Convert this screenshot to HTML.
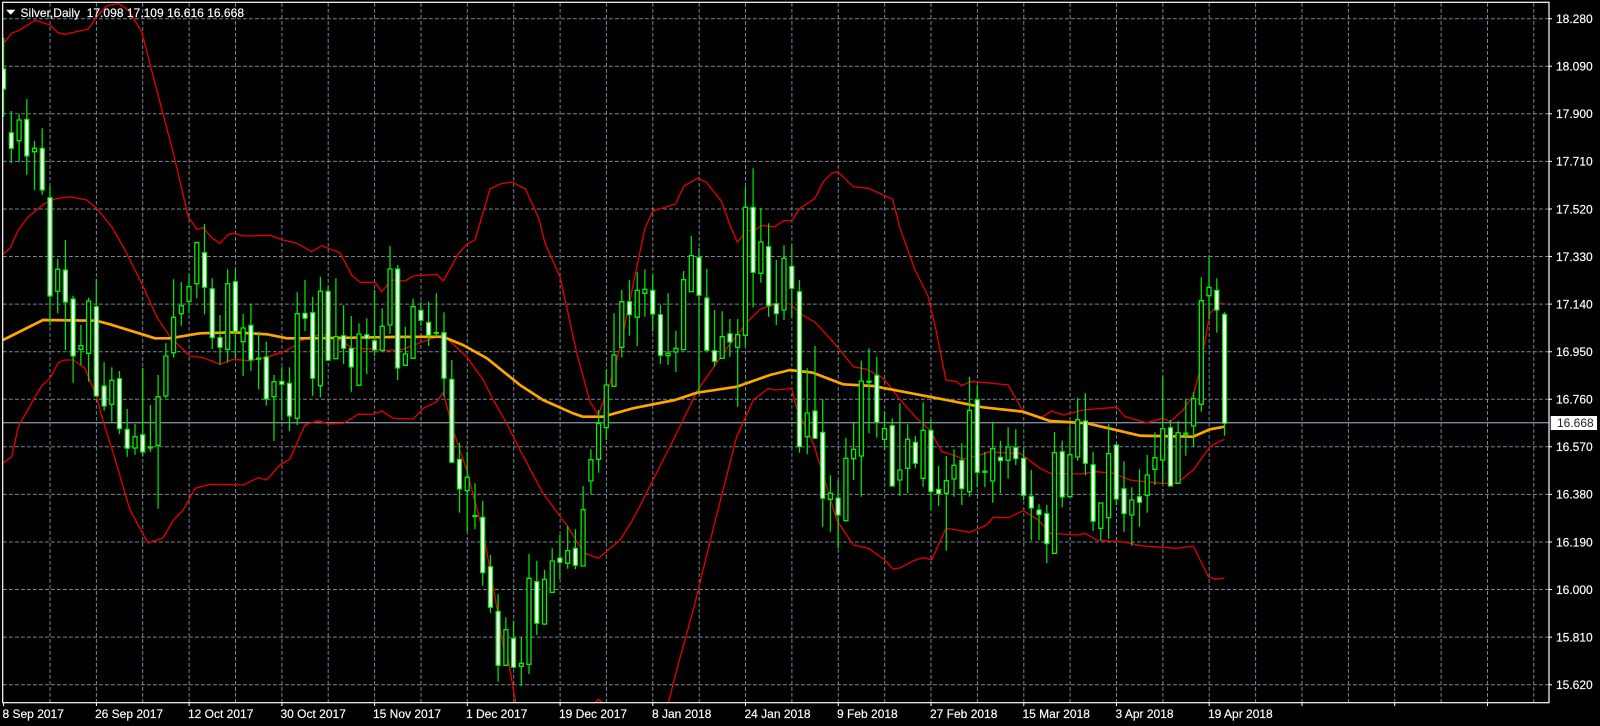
<!DOCTYPE html>
<html>
<head>
<meta charset="utf-8">
<title>Silver,Daily</title>
<style>
html,body{margin:0;padding:0;background:#000;width:1600px;height:726px;overflow:hidden}
svg{display:block;position:absolute;left:0;top:0}
text{font-family:"Liberation Sans",sans-serif;font-size:12px;fill:#fff;stroke:#fff;stroke-width:.15px;white-space:pre}
</style>
</head>
<body>
<svg width="1600" height="726" viewBox="0 0 1600 726" xmlns="http://www.w3.org/2000/svg">
<defs><clipPath id="c"><rect x="3" y="3" width="1546" height="700"/></clipPath></defs>
<rect width="1600" height="726" fill="#000"/>
<!-- grid -->
<g fill="none" stroke="#778899" stroke-width="1" stroke-dasharray="3.8 2.2">
<path d="M3 18.7H1549M3 66.3H1549M3 113.8H1549M3 161.4H1549M3 209H1549M3 256.5H1549M3 304.1H1549M3 351.7H1549M3 399.3H1549M3 446.8H1549M3 494.4H1549M3 542H1549M3 589.5H1549M3 637.1H1549M3 684.7H1549"/>
<path d="M50 3V703M96.4 3V703M142.7 3V703M189.1 3V703M235.5 3V703M281.9 3V703M328.2 3V703M374.6 3V703M421 3V703M467.3 3V703M513.7 3V703M560.1 3V703M606.4 3V703M652.8 3V703M699.2 3V703M745.5 3V703M791.9 3V703M838.3 3V703M884.7 3V703M931 3V703M977.4 3V703M1023.8 3V703M1070.1 3V703M1116.5 3V703M1162.9 3V703M1209.2 3V703M1255.6 3V703M1302 3V703M1348.4 3V703M1394.7 3V703M1441.1 3V703M1487.5 3V703M1533.8 3V703"/>
</g>
<g clip-path="url(#c)">
<!-- bid line -->
<path d="M3 422.7H1549" stroke="#778899" stroke-width="1.4" fill="none"/>
<!-- bands -->
<g fill="none" stroke="#e00000" stroke-width="1.35" stroke-linejoin="round">
<path d="M3 44L11.7 33.3L20 30L35 20.3L50 25L58 32.7L65 34.3L88.3 29L96.7 16.7L106.7 6L118.3 3.3L128.3 10L141.7 31.7L155 83.3L173.3 153L188.3 216.7L196.7 229.3L203.3 227.7L211.7 237.7L220 243.3L228.3 234.3L235 233.3L243.3 236L270 235.3L283.3 240L296.7 243.3L311.7 251.7L321.7 245.7L340 252.7L351.7 275L360 282.3L375 282.3L381.7 291.7L391.7 280L405 281L413.3 276L436.7 274.3L443.3 281L458.3 254L466.7 244.3L475 240L490 189L500 184L512 182L525.5 189L539 219L545 243.3L560 276.7L576.7 353L590 401.7L598.3 415L610 383.3L620 348.3L638.3 260L645 228L653 211L675.5 204L684 186L698 178L706.7 182.7L721.7 201.7L730 225L737.3 242.3L746.7 231L755 230L761.7 225.7L775 226.7L783.3 220.7L791.7 220.7L800 208.3L815 198.3L823.3 181.7L831.7 173.3L837.7 171.7L853.3 186.7L868.3 188.3L883.3 195L892.7 199.3L900 228.3L915 270L928 296L936 330L946 380L956.7 381.7L961.7 385.7L970 381.7L986.7 382.7L1008.3 385L1023.3 411.7L1040 418.3L1051.7 411L1063.3 415L1083.3 410L1103.3 408.3L1116.7 407.3L1125 416.7L1146.7 422.7L1163.3 418.3L1170 421.7L1183.3 410L1193.3 395L1200 370L1203.3 350L1210 313.3L1218.3 304L1224.5 303.3"/>
<path d="M3.3 254L10 248.3L18.3 230L28.3 216.7L45 203.3L55 199L70 196.7L86.7 200L96.7 208.3L111.7 226.7L125 250L143.3 286.7L156.7 316.7L170 336.7L190 356L203.3 357.7L220 364.3L233.3 359.3L248.3 360.7L266.7 357.3L283.3 351.7L293.3 346.7L300 341L310 336.7L323.3 334.3L343.3 341.7L351.7 348.3L375 349L383.3 350.7L403.3 349.3L420 342.7L436.7 336.7L446.7 338.3L466.7 356.7L483.3 380L493.3 400L506.7 423.3L520 450L543.3 494L566.7 525L580 546.7L586.7 554L598.3 558.3L620 540L632.7 520L673.3 440L696.7 391.7L726.7 348.3L748.3 321L760 309.3L776.7 304L790 304L800 313.3L815 322.3L833.3 342L853.3 366.7L866.7 369.3L883.3 378.3L903.3 403.3L916.7 418.3L930 430L941.7 451.7L953.3 455L963.3 459L976.7 456L990 451.7L1010 453.3L1020 453.3L1040 468.3L1050 473.3L1080 474L1096.7 471.7L1113.3 473.3L1130 480L1160 483.3L1176.7 483.3L1193.3 470L1210 446.7L1220 441L1224.5 439.5"/>
<path d="M3.3 463L11.7 456.7L18.3 426.7L33.3 400L41.7 386L50 378.3L58.3 362.7L65 360L73.3 360L85 368.3L96.7 396.7L103.3 421.7L113.3 453.3L130 510L148 543L163 538L173.5 520L183.3 510L195 488.3L210 484.3L243.3 485L258.3 477.7L266.7 480L280 465L290 459L305 425L318.3 420.7L328.3 424L343.3 423.3L358.3 414.3L373.3 414.3L381.7 411L393.3 418.3L413.3 419L423.3 408.3L436.7 401.7L443.3 392.3L453 430L466.7 470L483.3 533.3L495 596.7L503.3 646.7L508.3 660L515.7 703M595 703L598.3 699.3L602.7 703M668 704L678.6 663L694 607L714 525.5L736.7 436.7L753.3 400L768.3 388.5L775 390L791.7 388.5L796.7 408.3L813.3 443.3L822.7 473.3L836.7 520L853.3 545L868.3 548.3L885 560L893 569L900 568L913 561L918.3 559L925 557.7L931.7 560L946 528.3L956.7 530L970 532.3L986.7 525L993.3 517.3L1008.3 517.7L1023.3 510.7L1038.3 520L1050 533.3L1078.3 535L1085 533.3L1096.7 540L1126.7 542.3L1140 545.7L1176.7 548.3L1193.3 546L1208.3 576.7L1215 579.3L1224.5 578"/>
</g>
<!-- MA -->
<path fill="none" stroke="#ffa500" stroke-width="2.7" stroke-linejoin="round" d="M3 340L43 320L96 320.7L110 324.3L155 338.3L170 338.3L200 333.3L233 332.3L267 334.3L287 338.3L313 338.3L393 337L443 336.7L463 345L487 358.3L520 385L543 400L573 413.3L583 416.7L603 416.7L633 408.3L675 400L697 392.7L737 386.7L770 375L790 370L813 372.7L843 384.3L873 386L903 391.7L950 400.7L983 407.3L1023 411.7L1050 421L1087 423.3L1113 429.3L1140 435.7L1193 436.7L1210 429.3L1224.5 426.7"/>
<!-- wicks -->
<path fill="none" stroke="#00e600" stroke-width="1.25" d="M3.6 37.7V116.7M11.3 111V163.3M19.1 114.3V162.3M26.8 99V174.7M34.5 141V190.3M42.2 128.3V194.7M50 186V325.7M57.7 259V313.3M65.4 240V350M73.1 295.7V382.7M80.9 325V365M88.6 297.7V381.7M96.3 279.3V396M104.1 362.3V410.7M111.8 367.3V421.7M119.5 371V434M127.2 409V456.7M135 424V454.7M142.7 368V456M150.4 405V451.7M158.1 375V508.7M165.9 343.3V398.3M173.6 279.3V357.7M181.3 282V325.7M189 274.3V313.3M196.8 241.7V298.3M204.5 224V314.3M212.2 278.3V349M220 315V365M227.7 269.3V362.7M235.4 268.7V358.3M243.1 314V376M250.9 304V370.7M258.6 331.7V389.3M266.3 341.7V405.7M274 375V441M281.8 367.3V420M289.5 367.3V431M297.2 292.3V425M305 280V331M312.7 296.7V395.7M320.4 276.7V397.3M328.1 286V360.3M335.9 278.3V358.7M343.6 305.3V364M351.3 316V391.7M359 323.3V385.7M366.8 318.3V374M374.5 290V356M382.2 308.3V351.7M390 246V334M397.7 265V380M405.4 326.7V366M413.1 298.7V359M420.9 301.7V326M428.6 301.7V346M436.3 293.3V336.7M444 312.3V396.7M451.8 360V463.3M459.5 442.7V512.7M467.2 451.7V531.7M475 483.3V529.3M482.7 500.7V585.7M490.4 555V612.7M498.1 594.3V681.7M505.9 617.3V665M513.6 620.7V668.3M521.3 637.3V686M529 554V674M536.8 560.7V635M544.5 570V625M552.2 548.3V592.3M559.9 535V579M567.7 526V568.7M575.4 529.3V569.3M583.1 486V566M590.9 449.3V494.3M598.6 410V472.7M606.3 370V440M614 313.3V387M621.8 290V357.3M629.5 280V335.7M637.2 272.3V346M644.9 269.3V316.7M652.7 275V331.7M660.4 305.3V364M668.1 293.3V365M675.9 330.7V372M683.6 271V349.7M691.3 236V292M699 248V393M706.8 268.7V350.7M714.5 310V366.7M722.2 311.3V358.7M729.9 319V356.7M737.7 319V406.7M745.4 187.3V346.7M753.1 168.3V307.3M760.9 207.7V282.7M768.6 223.3V316.7M776.3 260V325M784 245.3V320M791.8 244.7V317.7M799.5 280V452.7M807.2 368.3V454.3M815 346V438.3M822.7 399.3V526.7M830.4 475.3V531.7M838.1 480V548.3M845.9 437.7V520.7M853.6 422.7V480M861.3 360.7V496.7M869 348.3V433.3M876.8 356.7V437.7M884.5 411.7V450M892.2 418.3V486.7M899.9 403.3V495.7M907.7 424.3V493.3M915.4 436V468.3M923.1 402.3V486.7M930.9 419.3V510.7M938.6 466V506M946.3 456V550.7M954 449.3V496.7M961.8 443.3V505M969.5 377V496.7M977.2 385V487.3M984.9 451.7V487.3M992.7 421.7V502.7M1000.4 440.7V493.3M1008.1 427.3V478.7M1015.8 429.3V465M1023.6 449.3V500M1031.3 470V540.7M1039 504.3V540M1046.8 505V563.3M1054.5 432V553.3M1062.2 440.7V507.3M1069.9 425.3V496.7M1077.7 397.7V460.7M1085.4 393.3V475.3M1093.1 451.7V531M1100.8 502.7V540M1108.6 424.3V539M1116.3 444.7V505M1124 461.3V531.7M1131.8 487.3V545.7M1139.5 469.3V526.7M1147.2 455V512.7M1154.9 432.3V485M1162.7 376V484M1170.4 420V486.3M1178.1 421V484M1185.8 399.3V455.7M1193.6 391.7V447.3M1201.3 277.3V411.7M1209 255.7V319M1216.8 278.3V332.7M1224.5 312.3V435.7"/>
<!-- hollow bodies -->
<path fill="#000" stroke="#00f000" stroke-width="1.3" d="M17.1 120h4V140.7h-4zM32.5 148.3h4V151.7h-4zM55.7 269.3h4V291.3h-4zM78.9 345.7h4V349.3h-4zM86.6 301h4V353.3h-4zM109.8 380.3h4V404.3h-4zM133 436.7h4V448h-4zM148.4 447h4V448h-4zM156.1 396.7h4V445.3h-4zM163.9 356h4V396h-4zM171.6 317.3h4V352.7h-4zM179.3 305.7h4V313.7h-4zM187 286.7h4V301.3h-4zM194.8 242.7h4V283.7h-4zM225.7 283.7h4V349.3h-4zM241.1 328h4V341.7h-4zM256.6 358.2h4V359.2h-4zM272 381.7h4V396.7h-4zM295.2 313.7h4V418.3h-4zM318.4 291.3h4V385.7h-4zM333.9 336.7h4V358.7h-4zM357 334h4V385.3h-4zM380.2 326.3h4V350.3h-4zM388 269h4V325h-4zM403.4 354h4V365.3h-4zM411.1 306.7h4V358.3h-4zM434.3 332.5h4V333.5h-4zM465.2 477.3h4V490.7h-4zM473 515.5h4V516.5h-4zM503.9 629.7h4V665.3h-4zM519.3 663.3h4V666.3h-4zM527 578.3h4V664.3h-4zM542.5 579.3h4V624h-4zM550.2 561h4V592.3h-4zM565.7 550.7h4V563.3h-4zM581.1 509.7h4V566h-4zM588.9 459.7h4V481h-4zM596.6 423.3h4V459.3h-4zM604.3 385h4V427.7h-4zM612 355h4V386.3h-4zM619.8 301.7h4V347.3h-4zM635.2 290.3h4V317.3h-4zM642.9 289.3h4V293.3h-4zM666.1 353.3h4V355.7h-4zM673.9 348.3h4V352h-4zM681.6 279.7h4V349.7h-4zM689.3 255.7h4V291.7h-4zM720.2 336.7h4V358.3h-4zM735.7 334.7h4V347.3h-4zM743.4 207.3h4V335.3h-4zM758.9 242h4V273.3h-4zM782 258.3h4V310h-4zM805.2 413h4V436.7h-4zM828.4 493.3h4V499.3h-4zM843.9 458.3h4V520.7h-4zM851.6 449.3h4V458.7h-4zM859.3 381h4V456h-4zM867 381.2h4V382.2h-4zM882.5 428.7h4V439.3h-4zM897.9 470h4V480h-4zM905.7 439.3h4V468.3h-4zM921.1 430.3h4V478.3h-4zM944.3 480.7h4V493.3h-4zM952 465.3h4V479h-4zM967.5 410.3h4V491.7h-4zM982.9 471.2h4V472.2h-4zM990.7 448.7h4V481h-4zM1006.1 447h4V460.3h-4zM1052.5 452.7h4V553.3h-4zM1067.9 454.7h4V496.7h-4zM1075.7 419.7h4V457h-4zM1098.8 503h4V528.3h-4zM1106.6 453.7h4V517.7h-4zM1129.8 500h4V515h-4zM1145.2 475h4V495.3h-4zM1152.9 457.7h4V469.3h-4zM1160.7 428.7h4V460h-4zM1176.1 432.7h4V483.3h-4zM1183.8 433.2h4V434.2h-4zM1191.6 398.7h4V426h-4zM1199.3 300.7h4V404.3h-4zM1207 287.3h4V295.7h-4z"/>
<!-- bear bodies -->
<path fill="#fff" stroke="#00f000" stroke-width="1.2" d="M1.6 69h4V89h-4zM9.3 132.7h4V148.3h-4zM24.8 119.3h4V156h-4zM40.2 148.3h4V190h-4zM48 197.7h4V296h-4zM63.4 270h4V302h-4zM71.1 299h4V356h-4zM94.3 306.7h4V396h-4zM102.1 386h4V406h-4zM117.5 378.7h4V428.7h-4zM125.2 429.3h4V448.3h-4zM140.7 434.7h4V452h-4zM202.5 252.7h4V287.3h-4zM210.2 288.7h4V337.7h-4zM218 337.7h4V347.3h-4zM233.4 281.7h4V331.7h-4zM248.9 325.3h4V360h-4zM264.3 357h4V399h-4zM279.8 381.3h4V384.3h-4zM287.5 383.3h4V416h-4zM303 313.3h4V318.3h-4zM310.7 312.7h4V378.3h-4zM326.1 291.3h4V360.3h-4zM341.6 335.7h4V348.3h-4zM349.3 348.3h4V367h-4zM364.8 334.7h4V338.7h-4zM372.5 340.7h4V350h-4zM395.7 269h4V368h-4zM418.9 310.3h4V320.3h-4zM426.6 322.3h4V335.3h-4zM442 332.7h4V378.3h-4zM449.8 379.3h4V462.3h-4zM457.5 459.3h4V489h-4zM480.7 517.3h4V572.7h-4zM488.4 566.7h4V607.3h-4zM496.1 611.3h4V665.3h-4zM511.6 638.3h4V667.3h-4zM534.8 581.7h4V623.3h-4zM557.9 558h4V562.3h-4zM573.4 548.3h4V565.3h-4zM627.5 301.7h4V314.7h-4zM650.7 290.3h4V314h-4zM658.4 314.7h4V355.3h-4zM697 257.3h4V295.3h-4zM704.8 298h4V350.3h-4zM712.5 350.7h4V361.3h-4zM727.9 333.7h4V342h-4zM751.1 207.3h4V272.3h-4zM766.6 246.7h4V305.7h-4zM774.3 303.7h4V313.7h-4zM789.8 266.3h4V288.3h-4zM797.5 291.7h4V446.7h-4zM813 411h4V438.3h-4zM820.7 432.3h4V498.3h-4zM836.1 498h4V515h-4zM874.8 375.3h4V422.3h-4zM890.2 425.7h4V486h-4zM913.4 442.3h4V463.3h-4zM928.9 430.3h4V491.7h-4zM936.6 489.3h4V493.7h-4zM959.8 460.3h4V488.7h-4zM975.2 399.7h4V472.3h-4zM998.4 457.3h4V460.7h-4zM1013.8 447.7h4V458.7h-4zM1021.6 458.3h4V495.3h-4zM1029.3 496.3h4V508h-4zM1037 510h4V514.7h-4zM1044.8 513.7h4V543.7h-4zM1060.2 451.7h4V497h-4zM1083.4 421h4V463.3h-4zM1091.1 464.7h4V521.3h-4zM1114.3 445h4V499h-4zM1122 488.7h4V513.7h-4zM1137.5 496.7h4V502.3h-4zM1168.4 427.7h4V486h-4zM1214.8 290.3h4V310h-4zM1222.5 314.3h4V423.3h-4z"/>
</g>
<!-- frame and ticks -->
<rect x="2.7" y="2.3" width="1546.3" height="700.4" fill="none" stroke="#fff" stroke-width="1.2"/>
<path fill="none" stroke="#fff" stroke-width="1" d="M1549 18.7h3M1549 66.3h3M1549 113.8h3M1549 161.4h3M1549 209h3M1549 256.5h3M1549 304.1h3M1549 351.7h3M1549 399.3h3M1549 446.8h3M1549 494.4h3M1549 542h3M1549 589.5h3M1549 637.1h3M1549 684.7h3M3.6 703v3M96.4 703v3M189.1 703v3M281.9 703v3M374.6 703v3M467.3 703v3M560.1 703v3M652.8 703v3M745.5 703v3M838.3 703v3M931 703v3M1023.8 703v3M1116.5 703v3M1209.2 703v3M1302 703v3M1394.7 703v3M1487.5 703v3"/>
<!-- header -->
<path d="M6 9.8h9.4L10.7 14.8z" fill="#fff"/>
<text x="20.5" y="17" xml:space="preserve" textLength="223.5">Silver,Daily  17.098 17.109 16.616 16.668</text>
<!-- price scale -->
<g>
<text x="1556" y="23">18.280</text>
<text x="1556" y="70.6">18.090</text>
<text x="1556" y="118.1">17.900</text>
<text x="1556" y="165.7">17.710</text>
<text x="1556" y="213.3">17.520</text>
<text x="1556" y="260.8">17.330</text>
<text x="1556" y="308.4">17.140</text>
<text x="1556" y="356">16.950</text>
<text x="1556" y="403.6">16.760</text>
<text x="1556" y="451.1">16.570</text>
<text x="1556" y="498.7">16.380</text>
<text x="1556" y="546.3">16.190</text>
<text x="1556" y="593.8">16.000</text>
<text x="1556" y="641.4">15.810</text>
<text x="1556" y="689">15.620</text>
</g>
<rect x="1550.7" y="416" width="46.3" height="14" fill="#fff"/>
<text x="1557" y="427.2" style="fill:#222;stroke:none">16.668</text>
<!-- time scale -->
<g>
<text x="2.5" y="718">8 Sep 2017</text>
<text x="95" y="718">26 Sep 2017</text>
<text x="188" y="718">12 Oct 2017</text>
<text x="280.5" y="718">30 Oct 2017</text>
<text x="373" y="718">15 Nov 2017</text>
<text x="466" y="718">1 Dec 2017</text>
<text x="559" y="718">19 Dec 2017</text>
<text x="652" y="718">8 Jan 2018</text>
<text x="744.5" y="718">24 Jan 2018</text>
<text x="837" y="718">9 Feb 2018</text>
<text x="930" y="718">27 Feb 2018</text>
<text x="1022.5" y="718">15 Mar 2018</text>
<text x="1115.5" y="718">3 Apr 2018</text>
<text x="1208" y="718">19 Apr 2018</text>
</g>
</svg>
</body>
</html>
